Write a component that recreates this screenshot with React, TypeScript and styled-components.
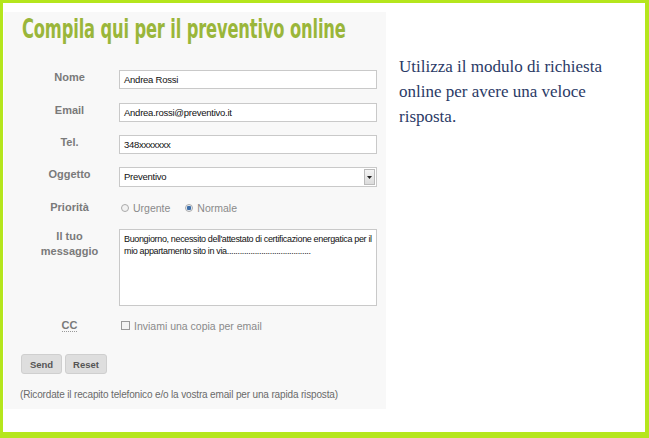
import * as React from 'react'
import styled, { createGlobalStyle } from 'styled-components'

const GlobalStyle = createGlobalStyle`
  html, body {
    margin: 0;
    padding: 0;
    background: #ffffff;
  }
`

const Frame = styled.div`
  box-sizing: border-box;
  width: 649px;
  height: 438px;
  border-style: solid;
  border-color: #b5e61d;
  border-width: 3px 4px 6px 3px;
  background: #ffffff;
  display: flex;
  align-items: flex-start;
  overflow: hidden;
`

const FormPanel = styled.div`
  box-sizing: border-box;
  width: 382px;
  height: 397px;
  margin-top: 9px;
  margin-left: 1px;
  padding: 0 0 0 16px;
  background: #f8f8f8;
  font-family: "Liberation Sans", Arial, sans-serif;
`

const Title = styled.h1`
  margin: 0;
  padding: 0 0 0 2px;
  height: 40px;
  font-family: "DejaVu Sans Condensed", "DejaVu Sans", sans-serif;
  font-weight: bold;
  font-size: 27px;
  line-height: 34px;
  color: #9ab63a;
  white-space: nowrap;
`

const TitleText = styled.span`
  display: inline-block;
  transform: scaleX(0.67);
  transform-origin: left center;
  letter-spacing: -0.2px;
`

const Row = styled.div<{ $mt: number }>`
  display: flex;
  align-items: flex-start;
  margin-top: ${p => p.$mt}px;
`

const Label = styled.div<{ $dotted?: boolean }>`
  width: 99px;
  flex-shrink: 0;
  text-align: center;
  font-size: 11px;
  font-weight: bold;
  line-height: 15px;
  color: #7a7a7a;
  span {
    border-bottom: ${p => (p.$dotted ? '1px dotted #999' : 'none')};
  }
`

const TextInput = styled.div`
  box-sizing: border-box;
  width: 258px;
  height: 19px;
  border: 1px solid #c9c9c9;
  background: #ffffff;
  padding: 0 4px;
  font-size: 9.5px;
  line-height: 17px;
  color: #111;
  letter-spacing: -0.25px;
`

const SelectBox = styled(TextInput)`
  height: 20px;
  line-height: 18px;
  display: flex;
  justify-content: space-between;
  align-items: center;
  padding-right: 1px;
`

const SelectArrow = styled.div`
  width: 9px;
  height: 14px;
  border: 1px solid #bbb;
  background: linear-gradient(#f4f4f4, #dcdcdc);
  display: flex;
  align-items: center;
  justify-content: center;
`

const TextArea = styled(TextInput)`
  height: 77px;
  line-height: 12px;
  padding-top: 3px;
  font-size: 9px;
  letter-spacing: -0.35px;
`

const Options = styled.div`
  display: flex;
  align-items: center;
  gap: 15px;
  padding-left: 2px;
  height: 15px;
`

const Option = styled.label`
  display: flex;
  align-items: center;
  gap: 4px;
  font-size: 10.5px;
  color: #8a8a8a;
`

const Radio = styled.span<{ $checked?: boolean }>`
  box-sizing: border-box;
  width: 8px;
  height: 8px;
  border-radius: 50%;
  border: 1px solid #aaa;
  background: ${p =>
    p.$checked ? 'radial-gradient(circle, #3d6ea8 0 2px, #e8eef6 2.5px)' : '#f2f2f2'};
`

const Check = styled.span`
  box-sizing: border-box;
  width: 9px;
  height: 9px;
  border: 1px solid #999;
  background: #f3f3f3;
`

const Buttons = styled.div`
  display: flex;
  gap: 3px;
  margin-top: 21px;
  margin-left: 1px;
`

const Button = styled.button<{ $w: number }>`
  box-sizing: border-box;
  width: ${p => p.$w}px;
  height: 20px;
  padding: 0;
  border: 1px solid #cfcfcf;
  border-radius: 3px;
  background: #dedede;
  font-family: "Liberation Sans", Arial, sans-serif;
  font-size: 9.5px;
  font-weight: bold;
  color: #555;
`

const Note = styled.p`
  margin: 13px 0 0 0;
  font-size: 10px;
  line-height: 15px;
  letter-spacing: -0.15px;
  color: #6a6a6a;
`

const Aside = styled.div`
  padding: 51px 0 0 13px;
  font-family: "Liberation Serif", "Times New Roman", serif;
  font-size: 17px;
  line-height: 25px;
  color: #2b3a66;
  width: 250px;
`

export default function App() {
  return (
    <>
      <GlobalStyle />
      <Frame>
        <FormPanel>
          <Title>
            <TitleText>Compila qui per il preventivo online</TitleText>
          </Title>
          <Row $mt={18}>
            <Label>Nome</Label>
            <TextInput>Andrea Rossi</TextInput>
          </Row>
          <Row $mt={14}>
            <Label>Email</Label>
            <TextInput>Andrea.rossi@preventivo.it</TextInput>
          </Row>
          <Row $mt={13}>
            <Label>Tel.</Label>
            <TextInput>348xxxxxxx</TextInput>
          </Row>
          <Row $mt={13}>
            <Label>Oggetto</Label>
            <SelectBox>
              Preventivo
              <SelectArrow>
                <svg width="5" height="3" viewBox="0 0 5 3">
                  <path d="M0 0h5L2.5 3z" fill="#222" />
                </svg>
              </SelectArrow>
            </SelectBox>
          </Row>
          <Row $mt={13}>
            <Label>Priorità</Label>
            <Options>
              <Option>
                <Radio />
                Urgente
              </Option>
              <Option>
                <Radio $checked />
                Normale
              </Option>
            </Options>
          </Row>
          <Row $mt={14}>
            <Label>
              Il tuo
              <br />
              messaggio
            </Label>
            <TextArea>
              Buongiorno, necessito dell'attestato di certificazione energatica per il mio
              appartamento sito in via.......................................
            </TextArea>
          </Row>
          <Row $mt={12}>
            <Label $dotted>
              <span>CC</span>
            </Label>
            <Options>
              <Option>
                <Check />
                Inviami una copia per email
              </Option>
            </Options>
          </Row>
          <Buttons>
            <Button $w={41}>Send</Button>
            <Button $w={42}>Reset</Button>
          </Buttons>
          <Note>(Ricordate il recapito telefonico e/o la vostra email per una rapida risposta)</Note>
        </FormPanel>
        <Aside>
          Utilizza il modulo di richiesta online per avere una veloce risposta.
        </Aside>
      </Frame>
    </>
  )
}
